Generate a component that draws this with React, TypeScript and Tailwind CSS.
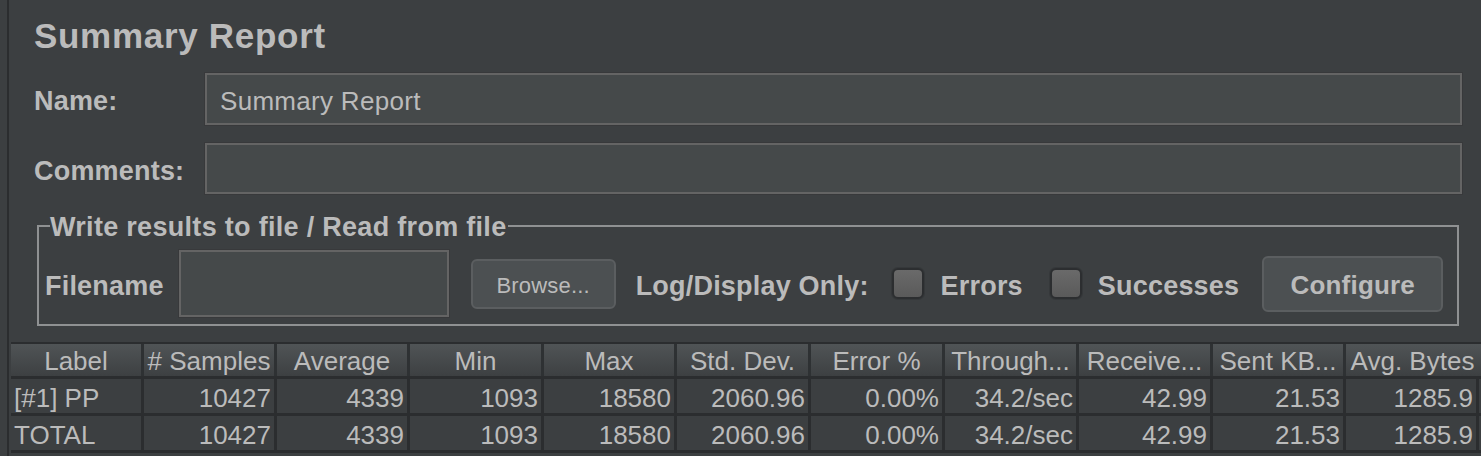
const COLS = [
  { name: "Label", w: "w-[133px]", left: true },
  { name: "# Samples", w: "w-[133px]" },
  { name: "Average", w: "w-[133px]" },
  { name: "Min", w: "w-[134px]" },
  { name: "Max", w: "w-[133px]" },
  { name: "Std. Dev.", w: "w-[134px]" },
  { name: "Error %", w: "w-[134px]" },
  { name: "Through...", w: "w-[134px]" },
  { name: "Receive...", w: "w-[134px]" },
  { name: "Sent KB...", w: "w-[133px]" },
  { name: "Avg. Bytes", w: "w-[133px]" },
];

const ROWS = [
  ["[#1] PP", "10427", "4339", "1093", "18580", "2060.96", "0.00%", "34.2/sec", "42.99", "21.53", "1285.9"],
  ["TOTAL", "10427", "4339", "1093", "18580", "2060.96", "0.00%", "34.2/sec", "42.99", "21.53", "1285.9"],
];

/* ── Small pieces ─────────────────────────────────────────────── */

function Field({ value, className }: { value?: string; className: string }) {
  return (
    <div
      className={`flex items-center border-2 border-[#646464] bg-[#45494a] px-[13px] pt-[5px] text-[26px] tracking-[0.3px] text-[#bbbbbb] shadow-[0_0_0_1px_#38393b] ${className}`}
    >
      {value}
    </div>
  );
}

function CheckBox() {
  return (
    <div className="h-[31px] w-[32px] flex-shrink-0 rounded-[6px] border-2 border-[#2c2e30] bg-gradient-to-b from-[#6a6a6a] to-[#5a5a5a] shadow-[0_0_0_1px_#35383a]" />
  );
}

function Label({ children, className = "" }: { children: React.ReactNode; className?: string }) {
  return (
    <span className={`pt-[5px] text-[27px] font-bold tracking-[0.2px] ${className}`}>{children}</span>
  );
}

function HeaderCell({ name, w, last }: { name: string; w: string; last?: boolean }) {
  return (
    <div
      className={`${w} flex h-full flex-shrink-0 justify-center whitespace-nowrap pt-[2px] text-[26px] leading-[30px] ${
        last ? "" : "border-r-[3px] border-[#2e3133]"
      }`}
    >
      {name}
    </div>
  );
}

/* ── App ──────────────────────────────────────────────────────── */

export default function App() {
  return (
    <div className="flex h-[456px] w-[1481px] overflow-hidden bg-[#3c3f41] font-['Liberation_Sans',Arial,sans-serif] text-[#bbbbbb]">
      {/* left splitter */}
      <div className="w-[7px] flex-shrink-0" />
      <div className="w-[2px] flex-shrink-0 bg-[#2b2d2f]" />

      <div className="flex min-w-0 flex-1 flex-col">
        {/* Title */}
        <div className="flex h-[70px] items-center pl-[25px] pt-[2px] text-[35px] font-bold tracking-[0.7px]">
          Summary Report
        </div>

        {/* Name */}
        <div className="mt-[3px] flex h-[52px] items-center pl-[25px] pr-[19px]">
          <Label className="w-[171px] flex-shrink-0">Name:</Label>
          <Field value="Summary Report" className="h-full flex-1" />
        </div>

        {/* Comments */}
        <div className="mt-[18px] flex h-[51px] items-center pl-[25px] pr-[19px]">
          <Label className="w-[171px] flex-shrink-0">Comments:</Label>
          <Field className="h-full flex-1" />
        </div>

        {/* Write results group */}
        <div className="relative ml-[28px] mr-[22px] mt-[31px] h-[101px] border-2 border-[#8f9192]">
          <div className="absolute left-[11px] top-[-15px] bg-[#3c3f41] pr-[1px] text-[27px] font-bold leading-[30px] tracking-[0.3px]">
            Write results to file / Read from file
          </div>
          <div className="flex h-full items-start pl-[6px] pt-[23px]">
            <div className="flex h-[67px] items-center">
              <Label>Filename</Label>
              <Field className="ml-[15px] h-[67px] w-[270px]" />
              <button className="ml-[22px] h-[50px] w-[145px] rounded-[6px] border-2 border-[#5b5e60] bg-[#4c5052] pt-[3px] text-[22px] tracking-[0.2px] text-[#bbbbbb]">
                Browse...
              </button>
              <Label className="ml-[20px]">Log/Display Only:</Label>
              <div className="ml-[23px]">
                <CheckBox />
              </div>
              <Label className="ml-[17px]">Errors</Label>
              <div className="ml-[27px]">
                <CheckBox />
              </div>
              <Label className="ml-[16px]">Successes</Label>
              <button className="ml-[23px] h-[56px] w-[181px] rounded-[6px] border-2 border-[#5b5e60] bg-[#4c5052] pt-[4px] text-[26px] font-bold tracking-[0.2px] text-[#bbbbbb]">
                Configure
              </button>
            </div>
          </div>
        </div>

        {/* Table */}
        <div className="ml-[2px] mt-[16px] flex flex-col border-t-2 border-[#2b2d2f]">
          <div className="flex h-[32px] bg-gradient-to-b from-[#505456] to-[#3d4042]">
            {COLS.map((c, i) => (
              <HeaderCell key={c.name} name={c.name} w={c.w} last={i === COLS.length - 1} />
            ))}
          </div>
          {ROWS.map((row, ri) => (
            <div key={ri} className="flex h-[37px] border-t-[3px] border-[#2b2d2f]">
              {row.map((cell, ci) => (
                <div
                  key={ci}
                  className={`${COLS[ci].w} flex h-full flex-shrink-0 items-center overflow-hidden whitespace-nowrap pt-[4px] text-[26px] leading-[30px] border-r-[3px] border-[#2b2d2f] ${
                    COLS[ci].left ? "justify-start pl-[3px]" : "justify-end pr-[3px]"
                  }`}
                >
                  {cell}
                </div>
              ))}
            </div>
          ))}
          <div className="h-[3px] bg-[#2b2d2f]" />
        </div>
      </div>
    </div>
  );
}
